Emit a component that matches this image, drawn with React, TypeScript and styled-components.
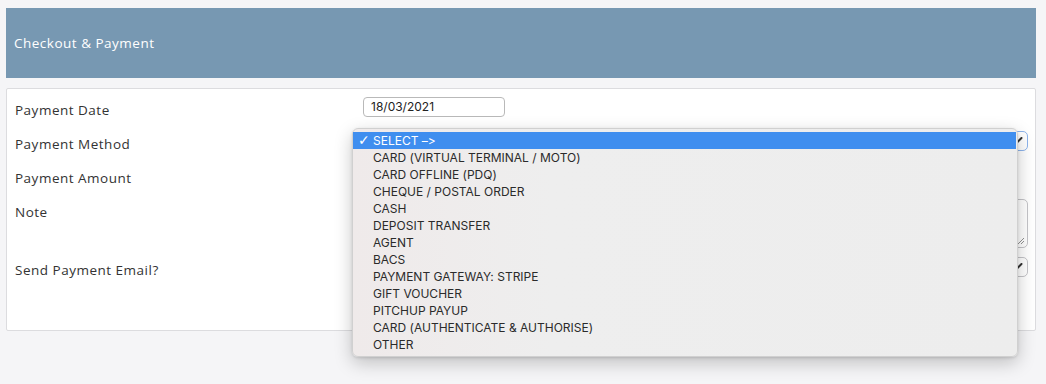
import React from 'react';
import styled, { createGlobalStyle } from 'styled-components';

const GlobalStyle = createGlobalStyle`
  html, body {
    margin: 0;
    padding: 0;
    background: #f5f5f7;
  }
  body {
    font-family: 'Open Sans', 'Noto Sans', sans-serif;
  }
`;

const Page = styled.div`
  min-height: 384px;
  box-sizing: border-box;
  padding: 8px 10px 0 6px;
  display: flex;
  flex-direction: column;
  gap: 10px;
`;

const Header = styled.div`
  height: 70px;
  background: #7798b2;
  display: flex;
  align-items: center;
  padding: 0 8px;
  color: #ffffff;
  font-size: 13.5px;
  letter-spacing: 0.5px;
`;

const Card = styled.div`
  background: #ffffff;
  border: 1px solid #dcdcdf;
  border-radius: 2px;
  height: 243px;
  padding: 8px 7px 0 8px;
  box-sizing: border-box;
  display: grid;
  grid-template-columns: 348px 1fr;
  grid-auto-rows: min-content;
  row-gap: 11px;
`;

const Label = styled.div`
  font-size: 13.5px;
  line-height: 20px;
  color: #333;
  padding-top: 3px;
  letter-spacing: 0.5px;
`;

const Field = styled.div<{ $pull?: number }>`
  position: relative;
  display: flex;
  margin-bottom: ${(p) => -(p.$pull ?? 0)}px;
`;

const TextInput = styled.div`
  width: 133px;
  height: 18px;
  border: 1px solid #b9b9b9;
  border-radius: 4px;
  font-family: 'Inter', 'Liberation Sans', sans-serif;
  font-size: 12px;
  line-height: 18px;
  padding-left: 7px;
  box-sizing: content-box;
  color: #222;
`;

const SelectBox = styled.div<{ $focused?: boolean }>`
  flex: 1;
  height: 18px;
  border: 1px solid ${(p) => (p.$focused ? '#8db4ec' : '#c4c4c8')};
  border-radius: 5px;
  display: flex;
  align-items: center;
  justify-content: flex-end;
  padding-right: 4px;
`;

const TextBox = styled.div`
  flex: 1;
  height: 47px;
  border: 1px solid #c4c4c8;
  border-radius: 5px;
  position: relative;
`;

const Grip = styled.svg`
  position: absolute;
  right: 2px;
  bottom: 2px;
`;

const Popup = styled.div`
  position: absolute;
  left: -11px;
  top: -3px;
  width: 666px;
  box-sizing: border-box;
  padding: 3px 1px 3px 0;
  background: linear-gradient(90deg, #efeaea 0%, #eeeeee 30%, #ededed 100%);
  border: 1px solid #d0d0d0;
  border-radius: 6px;
  box-shadow: 0 6px 18px rgba(0, 0, 0, 0.22), 0 1px 3px rgba(0, 0, 0, 0.12);
  z-index: 2;
`;

const Option = styled.div<{ $active?: boolean }>`
  height: 17px;
  display: flex;
  align-items: center;
  padding-left: 20px;
  position: relative;
  font-family: 'Inter', 'Liberation Sans', sans-serif;
  font-feature-settings: 'calt' 0, 'liga' 0;
  font-size: 12px;
  color: ${(p) => (p.$active ? '#ffffff' : '#2b2b2b')};
  background: ${(p) => (p.$active ? '#3f8eef' : 'transparent')};
`;

const Check = styled.span`
  position: absolute;
  left: 5px;
  top: 0;
  font-family: 'DejaVu Sans', sans-serif;
  font-size: 14px;
  line-height: 17px;
`;

const Chevron = () => (
  <svg width="8" height="8" viewBox="0 0 8 8">
    <path d="M1 6.5 L6.5 1" stroke="#333" strokeWidth="2" strokeLinecap="round" />
  </svg>
);

const methods = [
  'SELECT –>',
  'CARD (VIRTUAL TERMINAL / MOTO)',
  'CARD OFFLINE (PDQ)',
  'CHEQUE / POSTAL ORDER',
  'CASH',
  'DEPOSIT TRANSFER',
  'AGENT',
  'BACS',
  'PAYMENT GATEWAY: STRIPE',
  'GIFT VOUCHER',
  'PITCHUP PAYUP',
  'CARD (AUTHENTICATE & AUTHORISE)',
  'OTHER',
];

export default function App() {
  return (
    <>
      <GlobalStyle />
      <Page>
        <Header>Checkout &amp; Payment</Header>
        <Card>
          <Label>Payment Date</Label>
          <Field>
            <TextInput>18/03/2021</TextInput>
          </Field>

          <Label>Payment Method</Label>
          <Field>
            <SelectBox $focused>
              <Chevron />
            </SelectBox>
            <Popup>
              {methods.map((m, i) => (
                <Option key={m} $active={i === 0}>
                  {i === 0 && <Check>✓</Check>}
                  {m}
                </Option>
              ))}
            </Popup>
          </Field>

          <Label>Payment Amount</Label>
          <Field>
            <TextInput />
          </Field>

          <Label>Note</Label>
          <Field $pull={2}>
            <TextBox>
              <Grip width="8" height="8" viewBox="0 0 8 8">
                <path d="M1 7 L7 1 M4 7 L7 4" stroke="#777" strokeWidth="0.8" />
              </Grip>
            </TextBox>
          </Field>

          <Label>Send Payment Email?</Label>
          <Field>
            <SelectBox>
              <Chevron />
            </SelectBox>
          </Field>
        </Card>
      </Page>
    </>
  );
}
